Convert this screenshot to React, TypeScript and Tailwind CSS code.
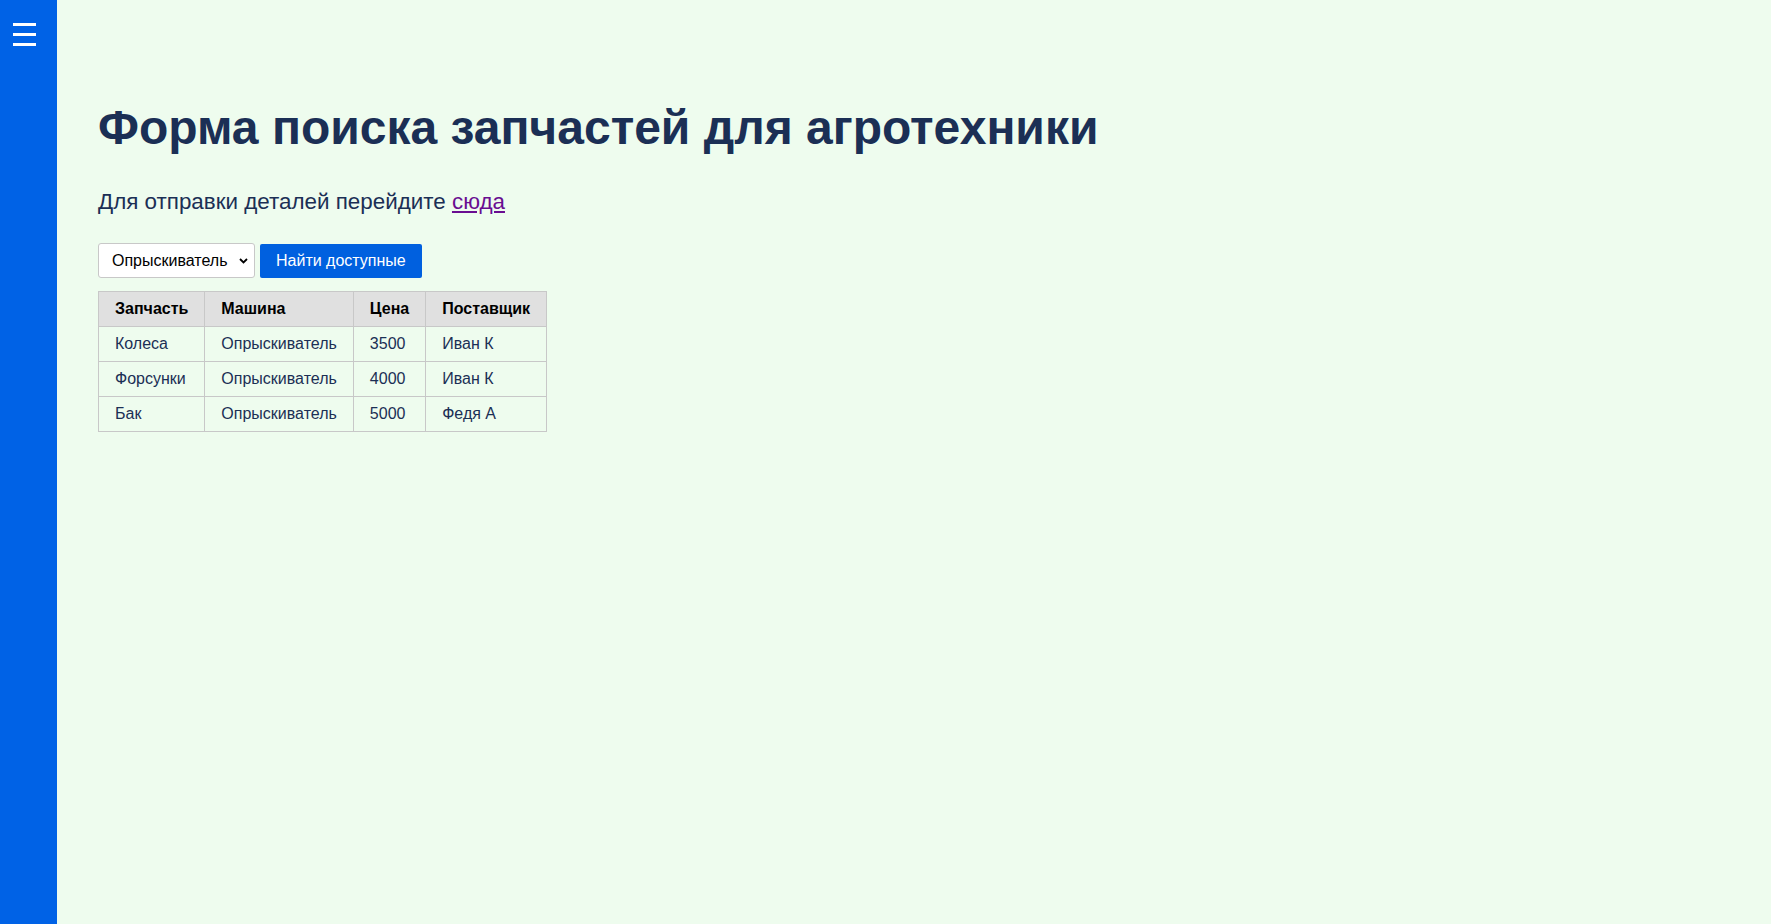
import React from "react";

const rows = [
  ["Колеса", "Опрыскиватель", "3500", "Иван К"],
  ["Форсунки", "Опрыскиватель", "4000", "Иван К"],
  ["Бак", "Опрыскиватель", "5000", "Федя А"],
];

export default function App() {
  return (
    <div
      className="flex min-h-[924px] w-full bg-[#eefcee]"
      style={{ fontFamily: '"Liberation Sans", Arial, sans-serif' }}
    >
      <aside className="w-[57px] shrink-0 bg-[#0062e6] pt-[23px] pl-[13px]">
        <div className="flex w-[23px] flex-col gap-[7.5px]">
          <div className="h-[2.5px] bg-white" />
          <div className="h-[2.5px] bg-white" />
          <div className="h-[2.5px] bg-white" />
        </div>
      </aside>
      <main className="flex-1 pl-[41px] pt-[100px] text-[#1b2f55]">
        <h1 className="m-0 text-[48px] leading-[56px] font-bold">
          Форма поиска запчастей для агротехники
        </h1>
        <p className="mt-[33px] text-[22.4px] leading-[26px]">
          Для отправки деталей перейдите{" "}
          <a href="#" className="text-[#6a0d91] underline">
            сюда
          </a>
        </p>
        <div className="mt-[28px] flex items-center gap-[5px]">
          <div className="relative flex h-[35px] w-[157px] items-center rounded-[3px] border border-[#c8c8c8] bg-white pl-[13px] text-[16px] text-black">
            Опрыскиватель
            <svg
              className="absolute right-[6px] top-[14px]"
              width="9"
              height="6"
              viewBox="0 0 9 6"
            >
              <path d="M1 1l3.5 3.5L8 1" stroke="#000" strokeWidth="1.8" fill="none" />
            </svg>
          </div>
          <button className="h-[34px] rounded-[2px] bg-[#0060df] px-[16px] text-[16px] text-white">
            Найти доступные
          </button>
        </div>
        <table className="mt-[13px] border-collapse text-[16px]">
          <thead>
            <tr className="bg-[#e0e0e0] text-black">
              {["Запчасть", "Машина", "Цена", "Поставщик"].map((h) => (
                <th
                  key={h}
                  className="border border-[#c8c8c8] px-[16px] h-[35px] text-left font-bold"
                >
                  {h}
                </th>
              ))}
            </tr>
          </thead>
          <tbody>
            {rows.map((r, i) => (
              <tr key={i}>
                {r.map((c, j) => (
                  <td key={j} className="border border-[#c8c8c8] px-[16px] h-[35px]">
                    {c}
                  </td>
                ))}
              </tr>
            ))}
          </tbody>
        </table>
      </main>
    </div>
  );
}
